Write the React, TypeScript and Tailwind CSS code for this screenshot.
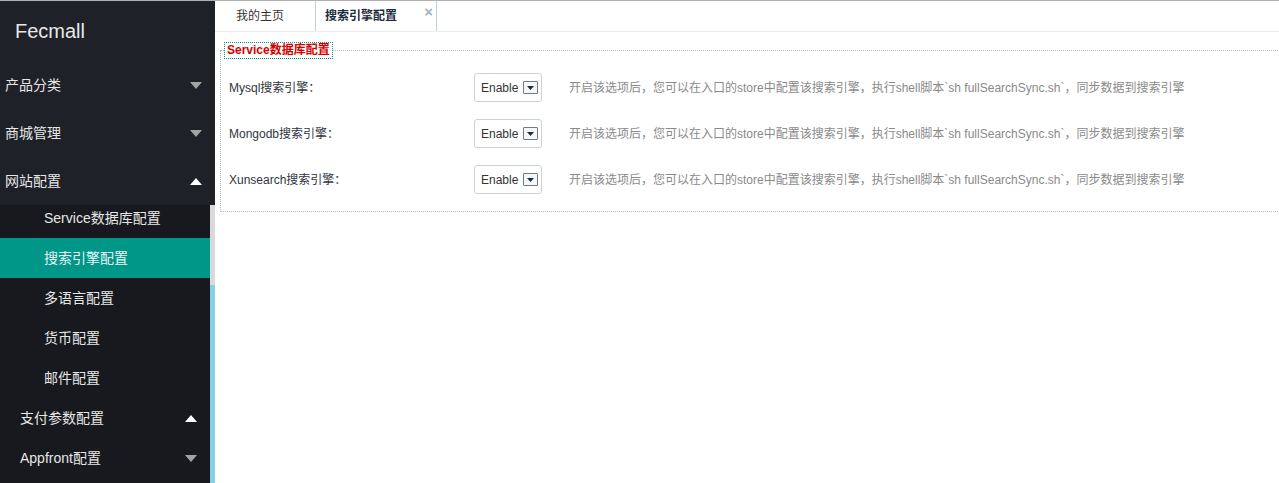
import React from "react";

const font = { fontFamily: '"Liberation Sans", "Noto Sans CJK SC", sans-serif' };

function Tri({ up, white }: { up?: boolean; white?: boolean }) {
  return (
    <svg width="12" height="7" viewBox="0 0 12 7" className="shrink-0">
      {up ? (
        <polygon points="0,7 12,7 6,0" fill={white ? "#ffffff" : "#a3a3a3"} />
      ) : (
        <polygon points="0,0 12,0 6,7" fill={white ? "#ffffff" : "#a3a3a3"} />
      )}
    </svg>
  );
}

function TopItem({ label, up }: { label: string; up?: boolean }) {
  return (
    <div className="h-[48px] flex items-center justify-between pl-[5px] pr-[13px] text-[14px] text-[#e6e6e6]">
      <span>{label}</span>
      <Tri up={up} white={up} />
    </div>
  );
}

function SubItem({ label, active }: { label: string; active?: boolean }) {
  return (
    <div
      className={
        "h-[40px] flex items-center pl-[44px] text-[14px] " +
        (active ? "bg-[#009688] text-[#e8f4f2]" : "text-[#e6e6e6]")
      }
    >
      {label}
    </div>
  );
}

function GroupItem({ label, up }: { label: string; up?: boolean }) {
  return (
    <div className="h-[40px] flex items-center justify-between pl-[20px] pr-[13px] text-[14px] text-[#e6e6e6]">
      <span>{label}</span>
      <Tri up={up} white={up} />
    </div>
  );
}

function Select() {
  return (
    <div className="w-[68px] h-[29px] border border-[#ccd3d8] rounded-[3px] flex items-center pl-[6px] pr-[2px] bg-white">
      <span className="text-[12px] text-[#333]">Enable</span>
      <div className="ml-[5px] w-[15px] h-[13px] border border-[#6f7b85] rounded-[1px] flex items-center justify-center bg-[#f4f6f8]">
        <svg width="7" height="4" viewBox="0 0 7 4">
          <polygon points="0,0 7,0 3.5,4" fill="#1d2b3a" />
        </svg>
      </div>
    </div>
  );
}

const desc =
  "开启该选项后，您可以在入口的store中配置该搜索引擎，执行shell脚本`sh fullSearchSync.sh`，同步数据到搜索引擎";

function Row({ label }: { label: string }) {
  return (
    <div className="h-[29px] flex items-center">
      <div className="w-[245px] text-[12px] text-[#2f3540]">{label}</div>
      <Select />
      <div className="ml-[27px] text-[12px] text-[#8a8a8a] whitespace-nowrap">{desc}</div>
    </div>
  );
}

export default function App() {
  return (
    <div style={font} className="w-[1279px] h-[483px] overflow-hidden flex border-t border-[#b0b0b0] bg-white">
      <aside className="w-[215px] shrink-0 flex flex-col bg-[#1f2129]">
        <div className="h-[60px] flex items-center pl-[15px] text-[20px] text-[#e8e8e8]">Fecmall</div>
        <TopItem label="产品分类" />
        <TopItem label="商城管理" />
        <TopItem label="网站配置" up />
        <div className="flex-1 flex min-h-0">
          <div className="w-[210px] bg-[#18191e] overflow-hidden">
            <div className="-mt-[7px]">
              <SubItem label="Service数据库配置" />
              <SubItem label="搜索引擎配置" active />
              <SubItem label="多语言配置" />
              <SubItem label="货币配置" />
              <SubItem label="邮件配置" />
              <GroupItem label="支付参数配置" up />
              <GroupItem label="Appfront配置" />
            </div>
          </div>
          <div className="w-[5px] flex flex-col">
            <div className="h-[80px] bg-[#d9d9d9]" />
            <div className="flex-1 bg-[#87cfe9]" />
          </div>
        </div>
      </aside>
      <main className="flex-1 min-w-0 flex flex-col">
        <div className="h-[31px] flex border-b border-[#ececec]">
          <div className="w-[101px] pl-[21px] flex items-center border-r border-[#bdd0d8] text-[12px] text-[#333]">
            我的主页
          </div>
          <div className="relative w-[121px] flex items-center pl-[9px] border-r border-[#bdd0d8] text-[12px] text-[#1c2a3c] font-semibold">
            搜索引擎配置
            <span className="absolute right-[3px] top-[3px] text-[15px] leading-[15px] text-[#9fb4bf] font-bold">×</span>
          </div>
        </div>
        <div className="pl-[5px] overflow-hidden">
          <fieldset className="w-[1100px] mt-[10px] border border-dotted border-[#a9bec7] pl-[8px] pt-[14px] pb-[17px] flex flex-col gap-[17px] m-0">
            <legend className="ml-[-5px] px-[2px] h-[17px] leading-[15px] border border-dotted border-[#0b8f80] text-[12px] font-bold text-[#d40000]">
              Service数据库配置
            </legend>
            <Row label="Mysql搜索引擎：" />
            <Row label="Mongodb搜索引擎：" />
            <Row label="Xunsearch搜索引擎：" />
          </fieldset>
        </div>
      </main>
    </div>
  );
}
